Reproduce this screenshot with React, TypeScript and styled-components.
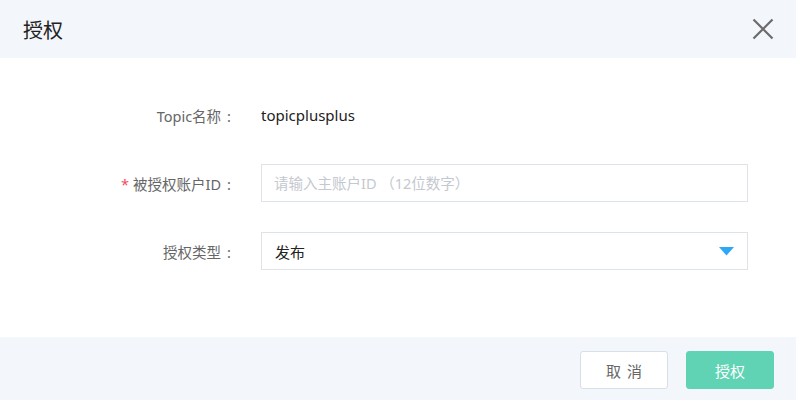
import React from "react";
import styled, { createGlobalStyle } from "styled-components";

const Global = createGlobalStyle`
  html, body { margin: 0; padding: 0; background: #ffffff; }
  body { font-family: "Noto Sans", "Noto Sans CJK SC", sans-serif; }
  * { box-sizing: border-box; }
`;

const Dialog = styled.div`
  width: 796px;
  height: 400px;
  display: flex;
  flex-direction: column;
  background: #ffffff;
`;

const Header = styled.div`
  height: 58px;
  background: #f3f6fa;
  display: flex;
  align-items: center;
  justify-content: space-between;
  padding: 0 22px 0 23px;
`;

const Title = styled.div`
  font-size: 20px;
  color: #222;
  font-family: "Noto Sans CJK SC", sans-serif;
`;

const CloseBtn = styled.button`
  border: none;
  background: transparent;
  padding: 0;
  width: 22px;
  height: 22px;
  display: flex;
  align-items: center;
  justify-content: center;
  cursor: pointer;
`;

const Body = styled.div`
  flex: 1;
  padding-top: 38px;
  display: flex;
  flex-direction: column;
  gap: 30px;
`;

const Row = styled.div`
  display: grid;
  grid-template-columns: 233px 487px;
  column-gap: 28px;
  align-items: center;
  height: 38px;
`;

const Label = styled.div`
  text-align: right;
  font-size: 14.5px;
  color: #666;
  font-family: "Noto Sans", "Noto Sans CJK SC", sans-serif;
  white-space: pre;
`;

const Colon = styled.span`
  display: inline-block;
  margin-left: 6px;
  margin-right: 2px;
`;

const Star = styled.span`
  color: #f5475c;
  margin-right: 4px;
`;

const Value = styled.div`
  font-size: 15px;
  color: #222;
  font-family: "Noto Sans", "Noto Sans CJK SC", sans-serif;
`;

const Input = styled.input`
  height: 38px;
  width: 487px;
  border: 1px solid #dde3eb;
  border-radius: 0;
  padding: 0 12px;
  font-size: 14.5px;
  font-family: "Noto Sans", "Noto Sans CJK SC", sans-serif;
  color: #222;
  outline: none;
  &::placeholder { color: #c4c8cf; }
`;

const Select = styled.div`
  height: 38px;
  width: 487px;
  border: 1px solid #dde3eb;
  padding: 0 13px 0 13px;
  display: flex;
  align-items: center;
  justify-content: space-between;
  font-size: 15px;
  color: #222;
  font-family: "Noto Sans CJK SC", sans-serif;
`;

const Footer = styled.div`
  height: 63px;
  background: #f3f6fa;
  display: flex;
  justify-content: flex-end;
  align-items: flex-start;
  padding: 14px 22px 0 0;
  gap: 18px;
`;

const Button = styled.button<{ $primary?: boolean }>`
  width: 88px;
  height: 38px;
  border-radius: 3px;
  font-size: 15px;
  font-family: "Noto Sans CJK SC", sans-serif;
  cursor: pointer;
  border: 1px solid ${(p) => (p.$primary ? "#5fd3b4" : "#d7dfe9")};
  background: ${(p) => (p.$primary ? "#5fd3b4" : "#ffffff")};
  color: ${(p) => (p.$primary ? "#ffffff" : "#666")};
  letter-spacing: ${(p) => (p.$primary ? "0" : "6px")};
  padding: 0;
  padding-left: ${(p) => (p.$primary ? "0" : "6px")};
`;

export default function App() {
  return (
    <>
      <Global />
      <Dialog>
        <Header>
          <Title>授权</Title>
          <CloseBtn aria-label="close">
            <svg width="22" height="22" viewBox="0 0 22 22">
              <path d="M1.5 1.5 L20.5 20.5 M20.5 1.5 L1.5 20.5" stroke="#6b6b6b" strokeWidth="2.2" fill="none" />
            </svg>
          </CloseBtn>
        </Header>
        <Body>
          <Row>
            <Label>Topic名称<Colon>:</Colon></Label>
            <Value>topicplusplus</Value>
          </Row>
          <Row>
            <Label><Star>*</Star>被授权账户ID<Colon>:</Colon></Label>
            <Input placeholder="请输入主账户ID （12位数字）" />
          </Row>
          <Row>
            <Label>授权类型<Colon>:</Colon></Label>
            <Select>
              <span>发布</span>
              <svg width="15" height="9" viewBox="0 0 15 9">
                <path d="M0 0 L15 0 L7.5 8.5 Z" fill="#2ea7f6" />
              </svg>
            </Select>
          </Row>
        </Body>
        <Footer>
          <Button>取消</Button>
          <Button $primary>授权</Button>
        </Footer>
      </Dialog>
    </>
  );
}
